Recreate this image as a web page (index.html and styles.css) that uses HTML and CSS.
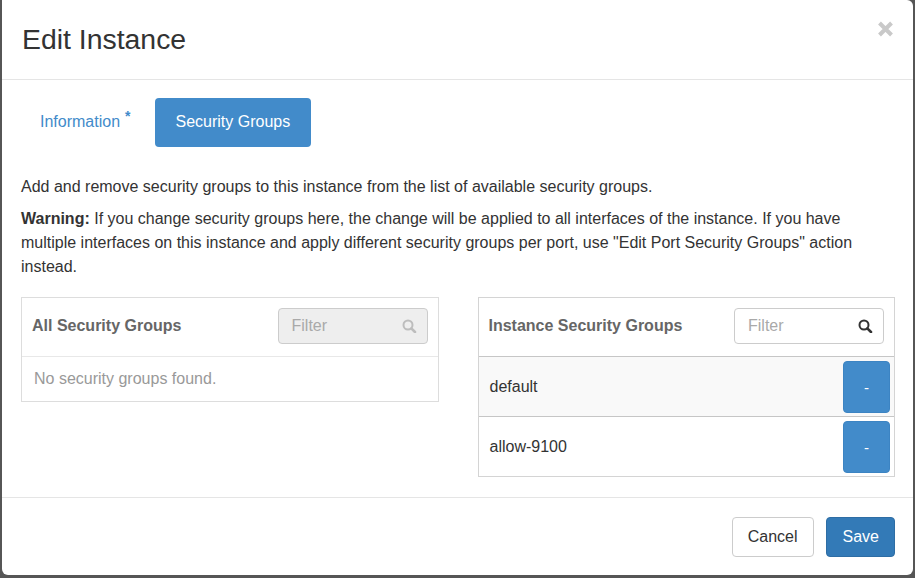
FILE: index.html
```html
<!DOCTYPE html>
<html lang="en">
<head>
<meta charset="utf-8">
<title>Edit Instance</title>
<link rel="stylesheet" href="styles.css">
</head>
<body>
<div class="modal">
  <div class="modal-header">
    <h4 class="modal-title">Edit Instance</h4>
    <button class="close" aria-label="Close">
      <svg width="17" height="16" viewBox="0 0 17 16"><path d="M2.5 2 L14.5 14 M14.5 2 L2.5 14" stroke="#c9c9c9" stroke-width="4"/></svg>
    </button>
  </div>
  <div class="modal-body">
    <ul class="nav-pills">
      <li><a class="pill">Information<span class="req">*</span></a></li>
      <li><a class="pill active">Security Groups</a></li>
    </ul>
    <p>Add and remove security groups to this instance from the list of available security groups.</p>
    <p class="warn"><strong>Warning:</strong> If you change security groups here, the change will be applied to all interfaces of the instance. If you have multiple interfaces on this instance and apply different security groups per port, use "Edit Port Security Groups" action instead.</p>
    <div class="transfer">
      <div class="panel panel-left">
        <div class="panel-head">
          <span class="panel-title">All Security Groups</span>
          <div class="filter disabled">
            <input type="text" placeholder="Filter" disabled>
            <svg width="15" height="14" viewBox="0 0 15 14"><circle cx="6" cy="6" r="4.5" fill="none" stroke="#bdbdbd" stroke-width="2"/><path d="M9.3 9.3 L13 13" stroke="#bdbdbd" stroke-width="2.6" stroke-linecap="round"/></svg>
          </div>
        </div>
        <div class="empty">No security groups found.</div>
      </div>
      <div class="panel panel-right">
        <div class="panel-head">
          <span class="panel-title">Instance Security Groups</span>
          <div class="filter">
            <input type="text" placeholder="Filter">
            <svg width="15" height="14" viewBox="0 0 15 14"><circle cx="6" cy="6" r="4.5" fill="none" stroke="#333" stroke-width="2"/><path d="M9.3 9.3 L13 13" stroke="#333" stroke-width="2.6" stroke-linecap="round"/></svg>
          </div>
        </div>
        <div class="item alt"><span>default</span><button class="btn-remove">-</button></div>
        <div class="item"><span>allow-9100</span><button class="btn-remove">-</button></div>
      </div>
    </div>
  </div>
  <div class="modal-footer">
    <button class="btn btn-default">Cancel</button>
    <button class="btn btn-primary">Save</button>
  </div>
</div>
</body>
</html>
```
FILE: styles.css
```css
* { box-sizing: border-box; }

body {
  margin: 0;
  height: 578px;
  overflow: hidden;
  background: #565656;
  font-family: "Liberation Sans", Arial, sans-serif;
  color: #333;
}

.modal {
  margin-left: 2px;
  width: 911px;
  height: 575px;
  background: #fff;
  border-radius: 0 6px 6px 6px;
  display: flex;
  flex-direction: column;
}

.modal-header {
  height: 80px;
  padding: 24px 19px 24px 20px;
  border-bottom: 1px solid #e5e5e5;
  display: flex;
  justify-content: space-between;
  align-items: flex-start;
}

.modal-title {
  margin: 0;
  font-size: 28.4px;
  line-height: 31px;
  font-weight: normal;
  color: #333;
}

.close {
  border: 0;
  background: none;
  padding: 0;
  margin-top: -3px;
  line-height: 0;
}

.modal-body {
  flex: 1;
  padding: 18px 18px 20px 19px;
}

.nav-pills {
  list-style: none;
  margin: 0 0 28px -1px;
  padding: 0;
  display: flex;
  gap: 4px;
}

.pill {
  display: block;
  padding: 12px 20px 13px;
  font-size: 16px;
  line-height: 24px;
  border-radius: 4px;
  color: #428bca;
}

.pill.active {
  background: #428bca;
  color: #fff;
  padding: 12px 21px 13px;
}

.req {
  font-size: 14px;
  font-weight: bold;
  margin-left: 5px;
  vertical-align: 6px;
  line-height: 0;
}

p {
  margin: 0 0 8px;
  font-size: 16px;
  line-height: 24px;
}

p.warn { margin-bottom: 18px; }

.transfer {
  display: grid;
  grid-template-columns: 1fr 1fr;
  column-gap: 39px;
  align-items: start;
}

.panel {
  border: 1px solid #dddddd;
}

.panel-right { border-color: #d4d4d4; }

.panel-head {
  display: flex;
  justify-content: space-between;
  align-items: center;
  padding: 10px 10px 12px;
  border-bottom: 1px solid #e8e8e8;
}

.panel-right .panel-head { border-bottom-color: #c6c6c6; }

.panel-title {
  font-size: 16px;
  font-weight: bold;
  color: #666;
}

.filter {
  width: 150px;
  height: 36px;
  border: 1px solid #ccc;
  border-radius: 4px;
  display: flex;
  align-items: center;
  padding: 0 10px 0 13px;
  background: #fff;
}

.filter.disabled { background: #eee; }

.filter input {
  flex: 1;
  min-width: 0;
  border: 0;
  padding: 0;
  background: transparent;
  font-family: inherit;
  font-size: 16px;
  color: #333;
  outline: none;
}

.filter input::placeholder { color: #a9a9a9; }

.empty {
  padding: 10px 12px;
  font-size: 16px;
  line-height: 24px;
  color: #999;
}

.item {
  display: flex;
  justify-content: space-between;
  align-items: center;
  padding: 4px 4px 3px 11px;
  border-bottom: 1px solid #c6c6c6;
  font-size: 16px;
  color: #333;
}

.item:last-child { border-bottom: 0; }

.item.alt { background: #f9f9f9; }

.btn-remove {
  width: 47px;
  height: 52px;
  background: #428bca;
  border: 1px solid #3c84c3;
  border-radius: 4px;
  color: #fff;
  font-family: inherit;
  font-size: 15px;
  padding: 0;
}

.modal-footer {
  border-top: 1px solid #e5e5e5;
  padding: 19px 18px 18px;
  display: flex;
  justify-content: flex-end;
  gap: 12px;
}

.btn {
  padding: 8px 15px;
  font-family: inherit;
  font-size: 16px;
  line-height: 22px;
  border-radius: 4px;
  border: 1px solid #ccc;
}

.btn-default {
  background: #fff;
  color: #333;
}

.btn-primary {
  background: #337ab7;
  border-color: #2e6da4;
  color: #fff;
  padding: 8px 15px 8px 16px;
}
```
